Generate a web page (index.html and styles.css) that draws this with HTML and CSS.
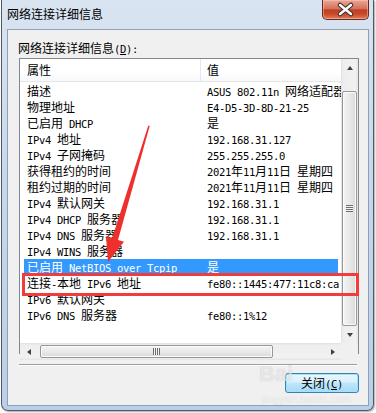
FILE: index.html
```html
<!DOCTYPE html>
<html lang="zh-CN">
<head>
    <meta charset="UTF-8">
    <meta name="viewport" content="width=device-width, initial-scale=1.0">
    <title>网络连接详细信息</title>
    <link rel="stylesheet" href="styles.css">
</head>
<body>
    <div class="window">
        <div class="titlebar">
            <span class="title">网络连接详细信息</span>
            <div class="close">
                <svg width="45" height="19" viewBox="0 0 45 19">
                    <path d="M17 5 L28 14 M28 5 L17 14" stroke="#3a3030" stroke-width="4.5" stroke-linecap="round"/>
                    <path d="M17 5 L28 14 M28 5 L17 14" stroke="#fff" stroke-width="2.4" stroke-linecap="round"/>
                </svg>
            </div>
        </div>
        <div class="panel">
            <div class="label">网络连接详细信息<span class="m">(<u>D</u>):</span></div>
            <div class="listbox">
                <div class="view">
                    <div class="header">
                        <div class="hcell c1">属性</div>
                        <div class="hcell c2">值</div>
                    </div>
                    <div class="rows">
                        <div class="row"><span class="k">描述</span><span class="v"><span class="m">ASUS 802.11n </span>网络适配器</span></div>
                        <div class="row"><span class="k">物理地址</span><span class="v"><span class="m">E4-D5-3D-8D-21-25</span></span></div>
                        <div class="row"><span class="k">已启用<span class="m"> DHCP</span></span><span class="v">是</span></div>
                        <div class="row"><span class="k"><span class="m">IPv4 </span>地址</span><span class="v"><span class="m">192.168.31.127</span></span></div>
                        <div class="row"><span class="k"><span class="m">IPv4 </span>子网掩码</span><span class="v"><span class="m">255.255.255.0</span></span></div>
                        <div class="row"><span class="k">获得租约的时间</span><span class="v"><span class="m">2021</span>年<span class="m">11</span>月<span class="m">11</span>日<span class="m"> </span>星期四</span></div>
                        <div class="row"><span class="k">租约过期的时间</span><span class="v"><span class="m">2021</span>年<span class="m">11</span>月<span class="m">11</span>日<span class="m"> </span>星期四</span></div>
                        <div class="row"><span class="k"><span class="m">IPv4 </span>默认网关</span><span class="v"><span class="m">192.168.31.1</span></span></div>
                        <div class="row"><span class="k"><span class="m">IPv4 DHCP </span>服务器</span><span class="v"><span class="m">192.168.31.1</span></span></div>
                        <div class="row"><span class="k"><span class="m">IPv4 DNS </span>服务器</span><span class="v"><span class="m">192.168.31.1</span></span></div>
                        <div class="row"><span class="k"><span class="m">IPv4 WINS </span>服务器</span><span class="v"></span></div>
                        <div class="row selected"><span class="k">已启用<span class="m"> NetBIOS over Tcpip</span></span><span class="v">是</span></div>
                        <div class="row"><span class="k">连接<span class="m">-</span>本地<span class="m"> IPv6 </span>地址</span><span class="v"><span class="m">fe80::1445:477:11c8:ca</span></span></div>
                        <div class="row"><span class="k"><span class="m">IPv6 </span>默认网关</span><span class="v"></span></div>
                        <div class="row"><span class="k"><span class="m">IPv6 DNS </span>服务器</span><span class="v"><span class="m">fe80::1%12</span></span></div>
                    </div>
                </div>
                <div class="vscroll">
                    <div class="sbtn"><span class="tri up"></span></div>
                    <div class="vthumb"><span class="grip"></span></div>
                    <div class="sbtn bottom"><span class="tri down"></span></div>
                </div>
                <div class="hscroll">
                    <div class="sbtn"><span class="tri left"></span></div>
                    <div class="hthumb"><span class="grip"></span></div>
                    <div class="sbtn right-end"><span class="tri right"></span></div>
                </div>
                <div class="corner"></div>
            </div>
            <div class="sep"></div>
            <div class="footer">
                <button class="btn">关闭<span class="m">(<u>C</u>)</span></button>
            </div>
        </div>
    </div>

    <!-- annotation drawn over the screenshot -->
    <div class="mark"></div>
    <svg class="arrow" width="376" height="413" viewBox="0 0 376 413">
        <polygon points="149.7,126 118,239.9 124,241.8 108,262 106,236.2 112.2,238.1 148.3,125.6" fill="#ee2f2c"/>
    </svg>
    <div class="wm-big">Bai</div>
    <div class="wm-small">jingyan.baidu.com</div>
</body>
</html>
```

FILE: styles.css
```css
body{
    margin: 0;
    width: 376px;
    height: 413px;
    position: relative;
    overflow: hidden;
    background: #fff;
    font-family: "Noto Sans CJK SC", sans-serif;
    font-size: 12px;
    color: #000;
}
.m{
    font-family: "DejaVu Sans Mono", monospace;
    font-size: 10.5px;
    letter-spacing: -0.32px;
}
.window{
    margin-left: 1px;
    width: 371px;
    height: 410px;
    border: 1px solid #4e5866;
    border-top: none;
    border-radius: 0 0 7px 7px;
    background: linear-gradient(#d9e4f1, #c9d9ec 40%, #bacfe8);
    display: flex;
    flex-direction: column;
    box-shadow: 1px 1px 2px rgba(0,0,0,.35);
}
.titlebar{
    height: 29px;
    display: flex;
    justify-content: space-between;
    align-items: flex-start;
}
.title{
    padding: 6px 0 0 5px;
    line-height: 16px;
}
.close{
    width: 45px;
    height: 19px;
    margin-right: 4px;
    border: 1px solid #6b2a1f;
    border-top: none;
    border-radius: 0 0 5px 5px;
    background: linear-gradient(#e9a796, #d5725d 45%, #c0401f 52%, #c84a2a 75%, #e2805f);
    box-shadow: inset 0 0 0 1px rgba(255,210,190,.45);
}
.close svg{
    display: block;
}
.panel{
    flex: 1;
    margin: 0 4px 4px 5px;
    border: 1px solid #8e9fb6;
    background: #f0f0f0;
    padding: 10px 9px 0 11px;
}
.label{
    line-height: 16px;
    margin-left: -1px;
}
.listbox{
    margin-top: 1px;
    height: 296px;
    box-sizing: border-box;
    border: 1px solid #828790;
    background: #fff;
    display: grid;
    grid-template-columns: 1fr 17px;
    grid-template-rows: 1fr 17px;
}
.view{
    overflow: hidden;
    white-space: nowrap;
}
.header{
    display: flex;
    height: 23px;
    box-sizing: border-box;
    border-bottom: 1px solid #e5e5e5;
    background: linear-gradient(#fff, #fff 60%, #f7f8fa);
}
.hcell{
    line-height: 22px;
}
.hcell.c1{
    width: 181px;
    padding-left: 7px;
    box-sizing: border-box;
    border-right: 1px solid #e3e8ee;
}
.hcell.c2{
    padding-left: 6px;
}
.rows{
    margin-top: 1px;
    padding-left: 4px;
}
.row{
    display: flex;
    width: 314px;
    height: 16px;
    line-height: 16px;
}
.row .k{
    width: 180px;
    flex: none;
    padding-left: 3px;
    box-sizing: border-box;
}
.row .v{
    padding-left: 3px;
}
.row.selected{
    background: #3399ff;
    color: #fff;
}
.vscroll{
    display: flex;
    flex-direction: column;
    background: linear-gradient(90deg, #e2e2e2, #eeeeee 15%, #f1f1f1 85%, #e4e4e4);
}
.hscroll{
    display: flex;
    align-items: center;
    background: linear-gradient(#e2e2e2, #eeeeee 15%, #f1f1f1 85%, #e4e4e4);
}
.corner{
    background: #f0f0f0;
}
.sbtn{
    width: 17px;
    height: 17px;
    flex: none;
    display: flex;
    align-items: center;
    justify-content: center;
}
.sbtn.bottom{
    margin-top: auto;
}
.sbtn.right-end{
    margin-left: auto;
}
.tri{
    width: 0;
    height: 0;
    border: 3px solid transparent;
}
.tri.up{
    border-bottom: 4px solid #404040;
    border-top: none;
}
.tri.down{
    border-top: 4px solid #404040;
    border-bottom: none;
}
.tri.left{
    border-right: 4px solid #404040;
    border-left: none;
}
.tri.right{
    border-left: 4px solid #404040;
    border-right: none;
}
.vthumb{
    margin: 15px 1px 0 1px;
    height: 233px;
    border: 1px solid #979797;
    border-radius: 2px;
    background: linear-gradient(90deg, #f4f4f4, #e9e9e9 50%, #d9d9d9);
    box-shadow: inset 0 0 0 1px #fbfbfb;
    display: flex;
    align-items: center;
    justify-content: center;
}
.vthumb .grip{
    width: 7px;
    height: 7px;
    background: repeating-linear-gradient(#6d6d6d 0 1px, #f4f4f4 1px 2px);
}
.hthumb{
    margin-left: 3px;
    width: 233px;
    height: 13px;
    box-sizing: border-box;
    border: 1px solid #979797;
    border-radius: 2px;
    background: linear-gradient(#f4f4f4, #e9e9e9 50%, #d9d9d9);
    box-shadow: inset 0 0 0 1px #fbfbfb;
    display: flex;
    align-items: center;
    justify-content: center;
}
.hthumb .grip{
    width: 7px;
    height: 7px;
    background: repeating-linear-gradient(90deg, #6d6d6d 0 1px, #f4f4f4 1px 2px);
}
.sep{
    margin-top: 10px;
    width: 338px;
    height: 1px;
    background: #a0a0a0;
    border-bottom: 1px solid #fff;
}
.footer{
    margin-top: 7px;
    display: flex;
    justify-content: flex-end;
}
.btn{
    width: 74px;
    height: 20px;
    padding: 0;
    border: 1px solid #3c7fb1;
    border-radius: 3px;
    background: linear-gradient(#eaf6fd, #d9f0fc 45%, #bee6fd 50%, #a7d9f5);
    box-shadow: inset 0 0 0 1px #9ee4fb;
    font-family: "Noto Sans CJK SC", sans-serif;
    font-size: 12px;
    color: #000;
    line-height: 16px;
}
.mark{
    position: absolute;
    left: 22px;
    top: 273px;
    width: 337px;
    height: 23px;
    box-sizing: border-box;
    border: 3px solid #f23c3c;
}
.arrow{
    position: absolute;
    left: 0;
    top: 0;
    pointer-events: none;
}
.wm-big{
    position: absolute;
    left: 259px;
    top: 360px;
    font-family: "Liberation Sans", sans-serif;
    font-size: 22px;
    font-weight: bold;
    line-height: 28px;
    color: rgba(255,255,255,.6);
    text-shadow: 0 0 1px rgba(0,0,0,.2);
}
.wm-small{
    position: absolute;
    left: 262px;
    top: 393px;
    font-family: "Liberation Sans", sans-serif;
    font-size: 11px;
    line-height: 13px;
    color: rgba(255,255,255,.65);
    text-shadow: 0 0 1px rgba(0,0,0,.15);
}
```
